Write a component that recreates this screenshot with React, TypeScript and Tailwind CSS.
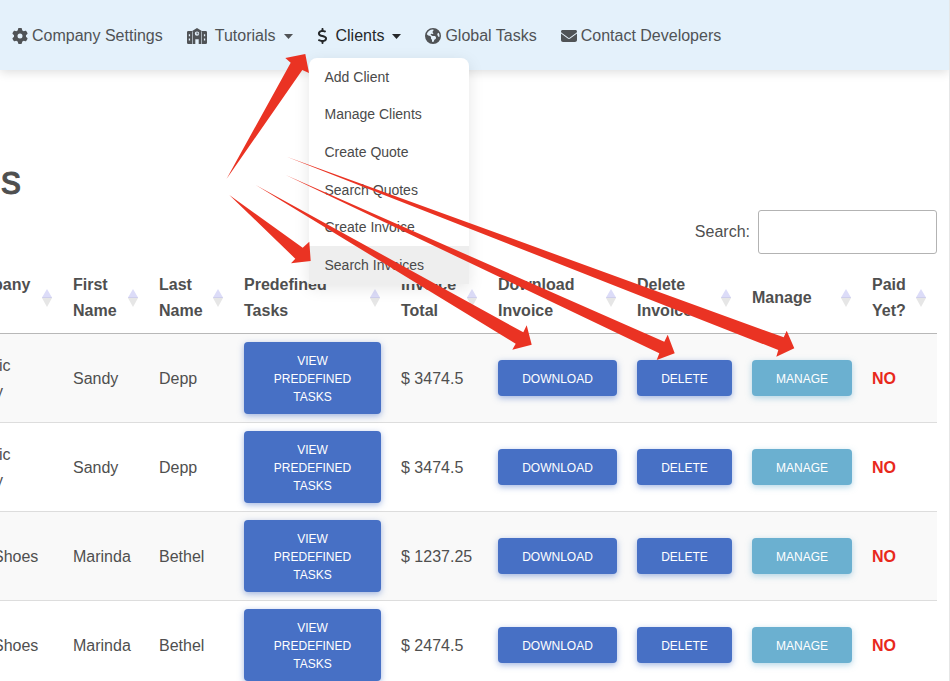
import React from "react";
import { FaDollarSign, FaEarthAmericas, FaEnvelope, FaGear } from "react-icons/fa6";

const menuItems = [
  "Add Client",
  "Manage Clients",
  "Create Quote",
  "Search Quotes",
  "Create Invoice",
  "Search Invoices",
];

const columns = [
  { label: "pany\n ", width: "w-[80px]" },
  { label: "First\nName", width: "w-[86px]" },
  { label: "Last\nName", width: "w-[85px]" },
  { label: "Predefined\nTasks", width: "w-[157px]" },
  { label: "Invoice\nTotal", width: "w-[97px]" },
  { label: "Download\nInvoice", width: "w-[139px]" },
  { label: "Delete\nInvoice", width: "w-[115px]" },
  { label: "Manage", width: "w-[120px]" },
  { label: "Paid\nYet?", width: "w-[75px]" },
];

const rows = [
  { id: 1, company: ["ic", "y"], first: "Sandy", last: "Depp", total: "$ 3474.5" },
  { id: 2, company: ["ic", "y"], first: "Sandy", last: "Depp", total: "$ 3474.5" },
  { id: 3, company: ["Shoes"], first: "Marinda", last: "Bethel", total: "$ 1237.25" },
  { id: 4, company: ["Shoes"], first: "Marinda", last: "Bethel", total: "$ 2474.5" },
];

const arrows = [
  "226.5,179 290.7,62.7 285.3,58 305.3,54 309,73 302.3,70",
  "229.3,195 302.7,247.7 309.3,241.7 310.7,261 291,263.3 295.3,258.7",
  "255.7,185 523.3,332.3 526.7,325.3 531.7,344.7 512.3,349.7 515.7,343.7",
  "285.7,175 664.3,341.7 667.7,334.7 674.7,353.3 656.7,360 659.3,353.3",
  "286.7,156.7 783.7,337.3 786.7,330.7 794.3,348.3 776.3,356.7 778.3,350",
];

const textCell = "pt-2.5 pb-2";
const buttonCell = "py-2";

function SchoolIcon() {
  return (
    <svg className="h-4 w-5" viewBox="0 0 20 16" fill="currentColor" fillRule="evenodd" aria-hidden="true">
      <path d="M1.3 3H5V16H1.3A1.3 1.3 0 0 1 0 14.7V4.3A1.3 1.3 0 0 1 1.3 3zM1.8 6.2v2h1.3v-2zM1.8 10.6v2h1.3v-2z" />
      <path d="M18.7 3H15V16h3.7a1.3 1.3 0 0 0 1.3-1.3V4.3a1.3 1.3 0 0 0-1.3-1.3zM16.9 6.2v2h1.3v-2zM16.9 10.6v2h1.3v-2z" />
      <path d="M10 0L14.8 3 14.4 4.2V16H11.7V11.2H8.3V16H5.6V4.2L5.2 3zM10 3.4a2.2 2.2 0 1 0 0 4.4 2.2 2.2 0 0 0 0-4.4z" />
      <path d="M9.6 4.2h.9v1.2h1v.9H9.6z" />
    </svg>
  );
}

function Caret() {
  return (
    <svg className="h-[5px] w-[9px]" viewBox="0 0 9 5" fill="currentColor" aria-hidden="true">
      <path d="M0 0h9L4.5 5z" />
    </svg>
  );
}

function SortIcon() {
  return (
    <svg className="h-[18px] w-[10px] shrink-0" viewBox="0 0 10 18" aria-hidden="true">
      <path d="M5 0l5 8.5H0z" fill="#dcdcf8" />
      <path d="M0 9h10L5 18z" fill="#e6e6e6" />
      <path d="M0.3 8h9.4L10 9H0z" fill="#cfcfec" />
    </svg>
  );
}

function ActionButton({ children, tone = "primary" }: { children: React.ReactNode; tone?: "primary" | "info" }) {
  const color =
    tone === "primary"
      ? "bg-[#4770c5] shadow-[0_2px_6px_rgba(71,112,197,0.5)]"
      : "bg-[#6bb0d0] shadow-[0_2px_6px_rgba(107,176,208,0.5)]";
  return (
    <button
      type="button"
      className={`block w-full rounded px-6 pt-2.5 pb-2 text-center text-[12px] leading-[18px] font-medium text-white uppercase ${color}`}
    >
      {children}
    </button>
  );
}

function Navbar() {
  return (
    <nav className="relative z-20 flex h-[70px] items-center bg-[#e4f1fb] pt-0.5 pl-3 text-[16px] leading-6 text-[#505356] shadow-[0_2px_10px_rgba(0,0,0,0.14)]">
      <ul className="flex items-center gap-6 whitespace-nowrap">
        <li>
          <a href="#settings" className="flex items-center gap-1">
            <FaGear />
            Company Settings
          </a>
        </li>
        <li>
          <button type="button" className="flex items-center gap-2">
            <SchoolIcon />
            Tutorials
            <Caret />
          </button>
        </li>
        <li className="relative">
          <button type="button" className="flex items-center gap-2 text-[#25282a]" aria-expanded="true">
            <FaDollarSign className="h-4 w-[11px]" />
            Clients
            <Caret />
          </button>
          <ul className="absolute top-[34px] -left-2 grid h-[226px] w-40 grid-rows-6 overflow-hidden rounded-t-lg bg-white text-[14px] text-[#4a4a4a] shadow-[0_4px_16px_rgba(0,0,0,0.1)]">
            {menuItems.map((item) => (
              <li key={item} className={item === "Search Invoices" ? "bg-[#eeeeee]" : ""}>
                <a href="#menu" className="flex h-full items-center px-4">
                  {item}
                </a>
              </li>
            ))}
          </ul>
        </li>
        <li>
          <a href="#tasks" className="flex items-center gap-1">
            <FaEarthAmericas />
            Global Tasks
          </a>
        </li>
        <li>
          <a href="#contact" className="flex items-center gap-1">
            <FaEnvelope />
            Contact Developers
          </a>
        </li>
      </ul>
    </nav>
  );
}

function InvoiceTable() {
  return (
    <div className="-ml-[17px]">
      <table className="w-full table-fixed border-separate border-spacing-0 text-left text-[16px] leading-[26px]">
        <thead>
          <tr>
            {columns.map((column) => (
              <th
                key={column.label}
                scope="col"
                className={`border-b border-[#b8b8b8] pt-[11px] pr-[11px] pb-[9px] pl-[10px] font-bold ${column.width}`}
              >
                <div className="flex items-center justify-between">
                  <span className="whitespace-pre">{column.label}</span>
                  <SortIcon />
                </div>
              </th>
            ))}
          </tr>
        </thead>
        <tbody className="[&_td]:border-b [&_td]:border-[#dddddd] [&_td]:px-[10px]">
          {rows.map((row) => (
            <tr key={row.id} className="odd:bg-[#f9f9f9]">
              <td className={textCell}>
                {row.company.map((line) => (
                  <div key={line} className={line === "Shoes" ? "" : line === "ic" ? "pl-1.5" : "pl-0.5"}>
                    {line}
                  </div>
                ))}
              </td>
              <td className={textCell}>{row.first}</td>
              <td className={textCell}>{row.last}</td>
              <td className={buttonCell}>
                <ActionButton>View Predefined Tasks</ActionButton>
              </td>
              <td className={`whitespace-nowrap ${textCell}`}>{row.total}</td>
              <td className={buttonCell}>
                <ActionButton>Download</ActionButton>
              </td>
              <td className={buttonCell}>
                <ActionButton>Delete</ActionButton>
              </td>
              <td className={buttonCell}>
                <ActionButton tone="info">Manage</ActionButton>
              </td>
              <td className={`font-bold text-[#e8291c] ${textCell}`}>NO</td>
            </tr>
          ))}
        </tbody>
      </table>
    </div>
  );
}

export default function App() {
  return (
    <div className="relative h-screen overflow-hidden border-r border-[#e6e6e6] bg-white font-['Liberation_Sans',Arial,sans-serif] text-[#4f4f4f]">
      <Navbar />
      <main className="pt-[88px] pr-3">
        <h1 className="pl-px text-[40px] leading-[44px] [-webkit-text-stroke:1px_#4f4f4f]">s</h1>
        <div className="mt-2 mb-[7px] flex items-center justify-end gap-2">
          <label htmlFor="search" className="text-[16px]">
            Search:
          </label>
          <input
            id="search"
            type="search"
            className="h-11 w-[179px] rounded-[3px] border border-[#b3b3b3] bg-white px-2 outline-none"
          />
        </div>
        <InvoiceTable />
      </main>
      <svg
        className="pointer-events-none absolute top-0 left-0 z-30 h-[681px] w-[950px]"
        viewBox="0 0 950 681"
        fill="#ea3323"
        aria-hidden="true"
      >
        {arrows.map((points) => (
          <polygon key={points} points={points} />
        ))}
      </svg>
    </div>
  );
}
